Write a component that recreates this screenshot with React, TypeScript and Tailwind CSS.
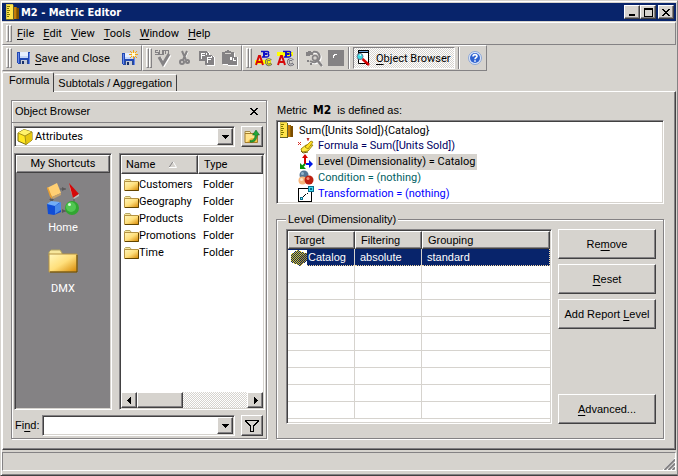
import type { ReactNode } from "react";
import clsx from "clsx";

const TAHOMA = "font-['Roboto','Liberation_Sans',sans-serif]";
const SANS = "font-['Liberation_Sans',Arial,sans-serif]";

const RAISED =
  "border border-t-white border-l-white border-r-[#424142] border-b-[#424142] bg-[#d6d3ce] shadow-[inset_-1px_-1px_0_#848284]";
const SUNKEN =
  "border border-t-[#848284] border-l-[#848284] border-r-white border-b-white p-px shadow-[inset_1px_1px_0_#424142,inset_-1px_-1px_0_#d6d3ce]";
const GROOVE = "border border-[#848284] shadow-[1px_1px_0_#fff,inset_1px_1px_0_#fff]";
const DITHER = "bg-[repeating-conic-gradient(#fff_0_25%,#d6d3ce_0_50%)] bg-[length:2px_2px]";

const MENUS = ["File", "Edit", "View", "Tools", "Window", "Help"];
const FOLDERS = ["Customers", "Geography", "Products", "Promotions", "Time"];
const EMPTY_ROWS = 9;

interface IconProps {
  className?: string;
}

function Hot({ text, at = 0 }: { text: string; at?: number }) {
  return (
    <span className="whitespace-pre">
      {text.slice(0, at)}
      <span className="underline underline-offset-2">{text[at]}</span>
      {text.slice(at + 1)}
    </span>
  );
}

/* ---------- icons ---------- */

function RulerIcon({ className }: IconProps) {
  return (
    <svg viewBox="0 0 14 16" className={clsx("h-4 w-[14px] shrink-0", className)} shapeRendering="crispEdges">
      <path d="M9 4h4v11H9z" fill="#7b4d00" />
      <path d="M7 3h4v12H7z" fill="#c67d08" />
      <path d="M10 3h1v12h-1z" fill="#946100" />
      <path d="M0 0h7v15H0z" fill="#ffe34a" />
      <path d="M0 0h7v1H0zM0 0h1v15H0z" fill="#d6c34a" />
      <path d="M7 1h1v14H7zM0 15h8v1H0z" fill="#63612a" />
      <path d="M1 2h3v1H1zM1 4h2v1H1zM1 6h3v1H1zM1 8h2v1H1zM1 10h3v1H1zM1 12h2v1H1z" fill="#7b7500" />
    </svg>
  );
}

function Floppy() {
  return (
    <>
      <path d="M0 1h13v12H1L0 12z" fill="#2149b5" />
      <path d="M1 2h1v10H1zM12 2h1v11h-1z" fill="#6b8ae7" />
      <path d="M3 1h8v6H3z" fill="#e7efff" />
      <path d="M3 5h8v2H3z" fill="#c6d7f7" />
      <path d="M3 9h8v4H3z" fill="#314a84" />
      <path d="M4 9h6v4H4z" fill="#c6cbd6" />
      <path d="M5 10h2v3H5z" fill="#18306b" />
    </>
  );
}

function SaveIcon() {
  return (
    <svg viewBox="0 0 14 14" className="size-[14px]" shapeRendering="crispEdges">
      <Floppy />
    </svg>
  );
}

function SaveNewIcon() {
  return (
    <svg viewBox="0 0 16 16" className="size-4" shapeRendering="crispEdges">
      <g transform="translate(0 2)">
        <Floppy />
      </g>
      <path d="M9 2h5v5H9z" fill="#ffe794" />
      <path d="M11 0h1v9h-1zM7 4h9v1H7zM8 1h1v1H8zM9 2h1v1H9zM14 1h1v1h-1zM13 2h1v1h-1zM8 7h1v1H8zM9 6h1v1H9zM14 7h1v1h-1zM13 6h1v1h-1z" fill="#efa218" />
      <path d="M10 3h3v3h-3z" fill="#fffbd6" />
    </svg>
  );
}

function SumCheckIcon() {
  return (
    <svg viewBox="0 0 18 18" className="size-[18px]" fill="none">
      <path d="m6 9 4 7 6-10" stroke="#fff" strokeWidth="3" />
      <path d="m5 8 4 7 6-10" stroke="#848284" strokeWidth="3" />
      <path
        d="M4 1.500H1.500V3H4v2.500H1M5.500 1v4.500H8V1M9.500 6V1.500H14V6M11.500 2v3"
        stroke="#848284"
        shapeRendering="crispEdges"
      />
    </svg>
  );
}

function CutIcon() {
  return (
    <svg viewBox="0 0 12 16" className="h-4 w-3" fill="none">
      <g stroke="#fff" transform="translate(1 1)">
        <path d="m3 1 4 9M8 1 4 10" />
      </g>
      <g stroke="#848284" strokeWidth="2">
        <path d="m3 1 4 9M8 1 4 10" />
        <circle cx="3" cy="12" r="2" />
        <circle cx="8.500" cy="11.500" r="1.500" />
      </g>
    </svg>
  );
}

function CopyIcon() {
  return (
    <svg viewBox="0 0 16 16" className="size-4" shapeRendering="crispEdges">
      <path d="M2 2h7l2 2v7H2z" fill="#fff" />
      <path d="M0 1h7l3 3v7H0z" fill="#848284" />
      <path d="M2 3h4v1H3v1h3v1H3v3H2zM7 3h1v2H7z" fill="#fff" />
      <path d="M8 6h6l2 2v8H8z" fill="#fff" />
      <path d="M6 5h6l3 3v7H6z" fill="#848284" />
      <path d="M8 7h4v1H9v1h3v1H9v3H8zM12 6h1v2h-1z" fill="#fff" />
    </svg>
  );
}

function PasteIcon() {
  return (
    <svg viewBox="0 0 17 16" className="h-4 w-[17px]" shapeRendering="crispEdges">
      <path d="M2 3h12v4h3v9H7v-1H2z" fill="#fff" />
      <path d="M1 2h3V1h2V0h2v1h2v1h3v5h3v8H7v-1H1z" fill="#848284" />
      <path d="M4 3h6v1H4z" fill="#d6d3ce" />
      <path d="M9 7h2v3H9zM12 8h1v2h2v1h-3z" fill="#fff" />
    </svg>
  );
}

function AbcIcon({ top = false }: { top?: boolean }) {
  return (
    <svg viewBox="0 0 17 17" className="size-[17px]" fill="none">
      <path d={top ? "M0 2h16v4H0z" : "M0 10h16v4H0z"} fill="#ffff00" />
      <path d="m1 15 3-9h1l3 9M2 12h5" stroke="#d60808" strokeWidth="2" />
      <path d="M6 1.500h6.500c1.500 0 1.500 2 0 2.500 2 0 1.500 3-.5 3H7" stroke="#1010c6" strokeWidth="1.500" />
      <path d="M9 1v6M8 4h4" stroke="#1010c6" strokeWidth="2" />
      <path d="M16 10.500c-3-2.500-5.500 0-4.500 2.500s3 2.500 5 .5" stroke="#63616b" strokeWidth="2.500" />
      <path d="M16 10.500c-3-2.500-5.500 0-4.500 2.500s3 2.500 5 .5" stroke={top ? "#e7e7e7" : "#ffff00"} />
    </svg>
  );
}

function FindIcon() {
  return (
    <svg viewBox="0 0 17 17" className="size-[17px]" fill="none">
      <g stroke="#fff" strokeWidth="2" transform="translate(1 1)">
        <path d="M7 2c5-1 8 3 6 7s-6 4-9 2" />
        <path d="m12 11 4 4" />
      </g>
      <path d="M0 2h2V1h3v1h2v3H4v1H0zM1 10h2v2H1zM4 13h2v2H4z" fill="#848284" />
      <g stroke="#848284">
        <path d="M7 2c5-1 8 3 6 7s-6 4-9 2" strokeWidth="2" />
        <circle cx="9" cy="8" r="2.500" strokeWidth="1.500" />
        <path d="m11 10 5 6" strokeWidth="2.500" />
      </g>
    </svg>
  );
}

function BlockIcon() {
  return (
    <svg viewBox="0 0 16 16" className="size-4" shapeRendering="crispEdges">
      <path d="M0 0h16v16H0z" fill="#848284" />
      <path d="M6 4h3v1H7v1H6v2H5V5h1z" fill="#fff" />
    </svg>
  );
}

function BrowseIcon() {
  return (
    <svg viewBox="0 0 15 16" className="h-4 w-[15px]">
      <path d="M2.500.500h10v13h-10z" fill="#fff" stroke="#000" />
      <path d="M2 0h11v3H2z" fill="#000" />
      <path d="M3 1h9v1H3z" fill="#73a6de" />
      <circle cx="4" cy="6.500" r="3" fill="#39dfe7" stroke="#63718c" />
      <path d="m3 5 2-1v2z" fill="#fff" />
      <path d="m6.500 9 6.500 6" stroke="#d60000" strokeWidth="2.500" />
      <path d="m9 13 2 2" stroke="#730000" />
    </svg>
  );
}

function HelpIcon() {
  return (
    <svg viewBox="0 0 14 14" className="size-[14px]" fill="none">
      <circle cx="7" cy="7" r="6.500" fill="#dfe9fb" stroke="#8ca6d6" />
      <circle cx="7" cy="7" r="5" fill="#2f62d0" />
      <path d="M5 5.500C5 3 9 3 9 5.300 9 6.500 7 6.800 7 8.200M7 9.300v1.400" stroke="#fff" strokeWidth="1.600" />
    </svg>
  );
}

function CubeIcon() {
  return (
    <svg viewBox="0 0 16 16" className="size-4 shrink-0" strokeLinejoin="round">
      <path d="M7 .500 15 3v8l-6 4.500L1 12V4z" fill="#ffe721" stroke="#7b6d10" />
      <path d="m1 4 7 3 7-4-8-2.500z" fill="#fff36b" />
      <path d="m8 7 7-4v8l-6 4.500z" fill="#e7c710" />
      <path d="m1 4 7 3 7-4M8 7l1 8" fill="none" stroke="#a59218" />
    </svg>
  );
}

function SelectedCubeIcon() {
  return (
    <svg viewBox="0 0 16 16" className="block size-4 shrink-0" shapeRendering="crispEdges">
      <defs>
        <pattern id="check" width="2" height="2" patternUnits="userSpaceOnUse">
          <path d="M1 0h1v1H1zM0 1h1v1H0z" fill="#08246b" />
        </pattern>
      </defs>
      <path d="m7 0 7 3 2 1v7l-7 5-9-4V4z" fill="#e7cb21" />
      <path d="m8 7 8-4v8l-7 5z" fill="#bd9a18" />
      <path d="m7 0 7 3 2 1v7l-7 5-9-4V4z" fill="url(#check)" />
    </svg>
  );
}

function FolderIcon({ big = false }: { big?: boolean }) {
  const id = big ? "folderBig" : "folderSmall";
  return (
    <svg viewBox="0 0 30 24" className={big ? "h-6 w-[30px]" : "h-3 w-[15px] shrink-0"}>
      <defs>
        <linearGradient id={id} x1="0" y1="0" x2="1" y2="1">
          <stop offset="0" stopColor="#fff7bd" />
          <stop offset="0.500" stopColor="#ffdf7b" />
          <stop offset="1" stopColor="#d68600" />
        </linearGradient>
      </defs>
      <path d="M1 5V3l2-2h9l2 3v3H1z" fill="#f7e79c" stroke="#b5a663" strokeWidth={big ? 1 : 2} />
      <path d="M1 5h28v18H1z" fill={`url(#${id})`} stroke="#b59242" strokeWidth={big ? 1 : 2} />
      <path d="M29 6v17H2" fill="none" stroke="#634500" strokeWidth={big ? 1 : 2} />
    </svg>
  );
}

function FolderUpIcon() {
  return (
    <svg viewBox="0 0 16 15" className="h-[15px] w-4">
      <path d="M1 4.500V2.500h5l1 2" fill="#ffefad" stroke="#a58a4a" />
      <path d="M1 4.500h12.500v9H1z" fill="#ffe38c" stroke="#a57d29" />
      <path d="M7 9h6v4H3z" fill="#f7c34a" />
      <path d="M6 11.500c3.500 0 5-2 5-5.500H8.500L12 1l3.500 5H13c0 5-3 8-7 7z" fill="#21a639" stroke="#086118" strokeWidth="0.500" />
    </svg>
  );
}

function HomeIcon() {
  return (
    <svg viewBox="0 0 32 32" className="size-8">
      <path d="M13 6h6M4 14v5M15 28h5M27 15v5" stroke="#5a595a" />
      <path d="m15 4 4 2-4 2zM2 16h5l-2 3zM15 26l4 2-4 2z" fill="#5a595a" />
      <path d="m0 5 10-5 4 10-9 4z" fill="#ffcf73" />
      <path d="m5 14 9-4v2l-8 4z" fill="#c6a26b" />
      <path d="m0 5 3 9 2 2v-2L1 4z" fill="#e79e31" />
      <path d="m22 0 10 11-6 4z" fill="#d60808" />
      <path d="m22 0 1 6 3 9z" fill="#ff7b7b" />
      <path d="m26 15 6-4v2l-5 3z" fill="#bdbebd" />
      <path d="M0 21 8 19l6 1v9l-7 3-6-1z" fill="#104dd6" />
      <path d="m0 21 4-3 9 1-5 4z" fill="#73aef7" />
      <path d="m8 23 6-4v8l-6 4z" fill="#4a8ae7" />
      <circle cx="25" cy="25" r="7" fill="#31a631" />
      <circle cx="24" cy="24" r="5" fill="#52c752" />
      <circle cx="22.500" cy="21.500" r="1.500" fill="#d6ffd6" />
    </svg>
  );
}

function FormulaIcon() {
  return (
    <svg viewBox="0 0 16 16" className="size-4">
      <path d="m3 11 5-4h7l-5 6-6 1z" fill="#ffeb42" stroke="#a58a08" />
      <path d="m7 9 6-6 2 1-5 7z" fill="#ffdf21" stroke="#947500" strokeWidth="0.750" />
      <path d="m3 13 2 2 5-1" fill="none" stroke="#6b5d08" />
      <path d="m0 4 3 3M3 4 0 7M9 0l1 2 1-2M10 2v1" stroke="#d63129" />
    </svg>
  );
}

function LevelIcon() {
  return (
    <svg viewBox="0 0 16 16" className="size-4">
      <path d="M7 3v7" stroke="#d60000" strokeWidth="2" />
      <path d="m7 0 3 4H4z" fill="#d60000" />
      <path d="M8 10h4" stroke="#0018e7" strokeWidth="2" />
      <path d="m11 6 4 4-4 4z" fill="#0018e7" />
      <path d="m7 10-3 3" stroke="#089208" strokeWidth="2" />
      <path d="M2 9v6h6z" fill="#089208" />
    </svg>
  );
}

function ConditionIcon() {
  return (
    <svg viewBox="0 0 16 16" className="size-4">
      <circle cx="6" cy="5" r="4.500" fill="#527594" />
      <circle cx="4.500" cy="3.500" r="1.500" fill="#94b6ce" />
      <circle cx="4.500" cy="10.500" r="4" fill="#f7b67b" />
      <circle cx="3.500" cy="9.500" r="1.500" fill="#ffe3c6" />
      <circle cx="11" cy="10" r="4.500" fill="#bd2110" />
      <circle cx="10" cy="8.500" r="1.500" fill="#f78a73" />
    </svg>
  );
}

function TransformationIcon() {
  return (
    <svg viewBox="0 0 16 16" className="size-4" shapeRendering="crispEdges">
      <path d="M0 2h14v14H0z" fill="#000" />
      <path d="M1 3h12v12H1z" fill="#fff" />
      <path d="M10 0h6v6h-6z" fill="#086d8c" />
      <path d="M11 1h4v4h-4z" fill="#42d7ef" />
      <path d="M12 2h2v2h-2z" fill="#086d8c" />
      <path d="M2 11h3v3H2z" fill="#086d8c" />
      <path d="M3 12h1v1H3z" fill="#8cefff" />
      <path d="M6 9h1v1H6zM7 8h1v1H7zM9 7h1v1H9zM5 10h1v1H5z" fill="#000" />
    </svg>
  );
}

function FunnelIcon() {
  return (
    <svg viewBox="0 0 14 12" className="h-3 w-[14px]" shapeRendering="crispEdges">
      <path d="M0 0h14v2h-1v1h-1v1h-1v1h-1v1H9v6H5V6H4V5H3V4H2V3H1V2H0z" fill="#000" />
      <path d="M2 1h10v1h-1v1h-1v1H9v1H8v6H6V5H5V4H4V3H3V2H2z" fill="#d6d3ce" />
    </svg>
  );
}

function Arrow({ dir }: { dir: "down" | "left" | "right" }) {
  const paths = {
    down: "M1 2h7v1H7v1H6v1H5v1H4V5H3V4H2V3H1z",
    left: "M6 0v7H5V6H4V5H3V4H2V3h1V2h1V1h1V0z",
    right: "M3 0v7h1V6h1V5h1V4h1V3H6V2H5V1H4V0z",
  };
  return (
    <svg viewBox="0 0 9 7" className="h-[7px] w-[9px]" shapeRendering="crispEdges">
      <path d={paths[dir]} fill="#000" />
    </svg>
  );
}

function CloseGlyph() {
  return (
    <svg viewBox="0 0 8 7" className="h-[7px] w-2" shapeRendering="crispEdges">
      <path d="M0 0h2v1h1v1h2V1h1V0h2v1H7v1H6v1H5v1h1v1h1v1h1v1H6V6H5V5H3v1H2v1H0V6h1V5h1V4h1V3H2V2H1V1H0z" fill="#000" />
    </svg>
  );
}

/* ---------- controls ---------- */

function Grip() {
  const bar = "w-[3px] border border-t-white border-l-white border-r-[#848284] border-b-[#848284]";
  return (
    <span className="flex shrink-0 self-stretch py-[2px]">
      <span className={bar} />
      <span className={bar} />
    </span>
  );
}

function Band({ children, className }: { children: ReactNode; className?: string }) {
  return (
    <div
      className={clsx(
        "flex items-center border border-t-white border-l-white border-r-[#848284] border-b-[#848284] pl-[3px]",
        className,
      )}
    >
      <Grip />
      {children}
    </div>
  );
}

function ToolButton({ label, children, disabled }: { label: string; children: ReactNode; disabled?: boolean }) {
  return (
    <button type="button" aria-label={label} disabled={disabled} className="flex h-5 w-[22px] items-center justify-center">
      {children}
    </button>
  );
}

function Separator() {
  return <span className="mx-px h-[22px] w-[2px] shrink-0 border-l border-l-[#848284] bg-white" />;
}

function CaptionButton({ label, children }: { label: string; children: ReactNode }) {
  return (
    <button type="button" aria-label={label} className={clsx(RAISED, "flex h-[14px] w-4 items-center justify-center")}>
      {children}
    </button>
  );
}

function PushButton({ text, at = 0 }: { text: string; at?: number }) {
  return (
    <button type="button" className={clsx(RAISED, "h-[30px] w-full")}>
      <Hot text={text} at={at} />
    </button>
  );
}

function DropArrow() {
  return (
    <span className={clsx(RAISED, "flex w-4 shrink-0 items-center justify-center self-stretch")}>
      <Arrow dir="down" />
    </span>
  );
}

/* ---------- panels ---------- */

function ObjectBrowser() {
  return (
    <section className={clsx(GROOVE, "flex w-[256px] shrink-0 flex-col")}>
      <header className="flex h-[22px] items-center justify-between border-b border-[#848284] pr-2 pl-[3px]">
        <h2>Object Browser</h2>
        <button type="button" aria-label="Close">
          <CloseGlyph />
        </button>
      </header>

      <div className={clsx(TAHOMA, "flex items-center gap-[6px] pt-[3px] pr-[3px] pl-[2px]")}>
        <div className={clsx(SUNKEN, "flex h-[21px] min-w-0 flex-1 items-center bg-white")}>
          <span className="pr-[2px] pl-px">
            <CubeIcon />
          </span>
          <select aria-label="Look in" className="min-w-0 flex-1 appearance-none bg-transparent outline-none">
            <option>Attributes</option>
          </select>
          <DropArrow />
        </div>
        <button type="button" aria-label="Up one level" className={clsx(RAISED, "flex h-[21px] w-[22px] items-center justify-center")}>
          <FolderUpIcon />
        </button>
      </div>

      <div className={clsx(TAHOMA, "flex flex-1 gap-[7px] pt-[6px] pr-px pl-[2px]")}>
        <nav className={clsx(SUNKEN, "flex w-[98px] shrink-0 flex-col bg-[#848284] text-white")}>
          <h3 className={clsx(RAISED, "h-[18px] text-center leading-4 text-black")}>My Shortcuts</h3>
          <a href="#home" className="mt-[10px] flex flex-col items-center">
            <HomeIcon />
            <span className="mt-[6px]">Home</span>
          </a>
          <a href="#dmx" className="mt-[15px] flex flex-col items-center">
            <FolderIcon big />
            <span className="mt-[9px]">DMX</span>
          </a>
        </nav>

        <div className={clsx(SUNKEN, "flex min-w-0 flex-1 flex-col bg-white")}>
          <table className="w-full table-fixed border-separate border-spacing-0 text-left">
            <thead>
              <tr className="h-[19px]">
                <th className={clsx(RAISED, "w-[77px] px-1 font-normal")}>
                  <span className="flex items-center justify-between pr-4">
                    Name
                    <svg viewBox="0 0 8 7" className="h-[7px] w-2">
                      <path d="M0 6.500 4 .500" stroke="#848284" />
                      <path d="M4 .500 7.500 6.500H0" fill="none" stroke="#fff" />
                    </svg>
                  </span>
                </th>
                <th className={clsx(RAISED, "px-[5px] font-normal")}>Type</th>
              </tr>
            </thead>
            <tbody className="before:block before:h-[2px]">
              {FOLDERS.map((name) => (
                <tr key={name} className="h-[17px]">
                  <td className="p-0">
                    <span className="flex items-center pl-[3px]">
                      <FolderIcon />
                      {name}
                    </span>
                  </td>
                  <td className="p-0 pl-[5px]">Folder</td>
                </tr>
              ))}
            </tbody>
          </table>
          <div className={clsx(DITHER, "mt-auto flex h-4")}>
            <button type="button" aria-label="Scroll left" className={clsx(RAISED, "flex w-4 items-center justify-center")}>
              <Arrow dir="left" />
            </button>
            <span className={clsx(RAISED, "w-[46px]")} />
            <button type="button" aria-label="Scroll right" className={clsx(RAISED, "ml-auto flex w-4 items-center justify-center")}>
              <Arrow dir="right" />
            </button>
          </div>
        </div>
      </div>

      <div className="flex items-center pt-[5px] pr-[3px] pb-[2px] pl-[3px]">
        <label htmlFor="find" className="w-[27px]">
          <Hot text="Find:" at={2} />
        </label>
        <div className={clsx(SUNKEN, "flex h-[21px] min-w-0 flex-1 items-center bg-white")}>
          <input id="find" className="min-w-0 flex-1 px-1 outline-none" />
          <DropArrow />
        </div>
        <button type="button" aria-label="Filter" className={clsx(RAISED, "ml-[6px] flex h-[21px] w-[22px] items-center justify-center")}>
          <FunnelIcon />
        </button>
      </div>
    </section>
  );
}

function DefinitionTree() {
  const parts = [
    { text: "Formula = Sum([Units Sold])", color: "text-[#000063]", icon: <FormulaIcon /> },
    { text: "Level (Dimensionality) = Catalog", color: "bg-[#d6d3ce] text-black", icon: <LevelIcon /> },
    { text: "Condition = (nothing)", color: "text-[#006163]", icon: <ConditionIcon /> },
    { text: "Transformation = (nothing)", color: "text-[#0000ff]", icon: <TransformationIcon /> },
  ];
  return (
    <div className={clsx(SUNKEN, TAHOMA, "min-h-[84px] bg-white")}>
      <div className="flex h-4 items-center gap-[5px] pl-[2px]">
        <RulerIcon />
        Sum([Units Sold]){"{Catalog}"}
      </div>
      <ul>
        {parts.map((part) => (
          <li key={part.text} className="flex h-4 items-center gap-[2px] pl-5">
            {part.icon}
            <span className={clsx("px-[2px] leading-4", part.color)}>{part.text}</span>
          </li>
        ))}
      </ul>
    </div>
  );
}

function LevelTable() {
  const cell = "border-r border-b border-[#d6d3ce] p-0 last:border-r-0";
  const picked = "border-r border-[#d6d3ce] bg-[#08246b] p-0 text-white last:border-r-0";
  const head = clsx(RAISED, "pl-[5px] font-normal");
  return (
    <div className={clsx(SUNKEN, "min-w-0 flex-1 bg-white")}>
      <table className="w-full table-fixed border-separate border-spacing-0 text-left">
        <thead>
          <tr className="h-[18px]">
            <th className={clsx(head, "w-[67px]")}>Target</th>
            <th className={clsx(head, "w-[67px]")}>Filtering</th>
            <th className={head}>Grouping</th>
          </tr>
        </thead>
        <tbody>
          <tr className="h-[17px]">
            <td className={picked}>
              <span className="flex h-[17px] items-center">
                <span className="shrink-0 bg-white pl-[3px]">
                  <SelectedCubeIcon />
                </span>
                <span className="flex-1 border-b border-dotted border-[#f7dba5] pl-px leading-4">Catalog</span>
              </span>
            </td>
            <td className={picked}>
              <span className="block h-[17px] border-b border-dotted border-[#f7dba5] pl-[5px] leading-4">absolute</span>
            </td>
            <td className={picked}>
              <span className="block h-[17px] border-r border-b border-dotted border-[#f7dba5] pl-[5px] leading-4">
                standard
              </span>
            </td>
          </tr>
          {Array.from({ length: EMPTY_ROWS }, (_, i) => (
            <tr key={i} className="h-[17px]">
              <td className={cell} />
              <td className={cell} />
              <td className={cell} />
            </tr>
          ))}
        </tbody>
      </table>
    </div>
  );
}

export default function App() {
  return (
    <div
      className={clsx(
        SANS,
        "flex min-h-screen flex-col border border-t-[#d6d3ce] border-r-[#848284] border-b-[#424142] border-l-[#d6d3ce] bg-[#d6d3ce] p-px text-[11px] leading-[13px] text-black shadow-[inset_1px_1px_0_#fff,inset_0_-1px_0_#848284]",
      )}
    >
      <div className="mt-px flex h-[18px] items-center bg-[#08246b] pr-[2px] pl-1 text-white">
        <RulerIcon />
        <h1 className="ml-px flex-1 font-['DejaVu_Sans_Condensed','DejaVu_Sans',sans-serif] font-bold">M2 - Metric Editor</h1>
        <div className="flex">
          <CaptionButton label="Minimize">
            <svg viewBox="0 0 9 8" className="h-2 w-[9px]">
              <path d="M1 6h6v2H1z" fill="#000" />
            </svg>
          </CaptionButton>
          <CaptionButton label="Maximize">
            <svg viewBox="0 0 9 9" className="size-[9px]" shapeRendering="crispEdges">
              <path d="M0 0h9v9H0zM1 2v6h7V2z" fill="#000" fillRule="evenodd" />
            </svg>
          </CaptionButton>
          <span className="w-[2px]" />
          <CaptionButton label="Close">
            <CloseGlyph />
          </CaptionButton>
        </div>
      </div>

      <Band className={clsx(TAHOMA, "mt-px h-[23px]")}>
        <nav className="ml-[5px] flex gap-[9px]">
          {MENUS.map((menu) => (
            <button key={menu} type="button">
              <Hot text={menu} />
            </button>
          ))}
        </nav>
      </Band>

      <div className={clsx(TAHOMA, "flex h-[26px]")}>
        <Band className="w-[140px]">
          <button type="button" className="ml-[5px] flex items-center gap-1">
            <SaveIcon />
            <Hot text="Save and Close" />
          </button>
          <span className="ml-auto">
            <ToolButton label="Save as">
              <SaveNewIcon />
            </ToolButton>
          </span>
        </Band>
        <Band className="w-[100px]">
          <ToolButton label="Validate" disabled>
            <SumCheckIcon />
          </ToolButton>
          <ToolButton label="Cut" disabled>
            <CutIcon />
          </ToolButton>
          <ToolButton label="Copy" disabled>
            <CopyIcon />
          </ToolButton>
          <ToolButton label="Paste" disabled>
            <PasteIcon />
          </ToolButton>
        </Band>
        <Band className="w-[245px]">
          <ToolButton label="Name">
            <AbcIcon />
          </ToolButton>
          <ToolButton label="Caption">
            <AbcIcon top />
          </ToolButton>
          <Separator />
          <span className="w-[3px]" />
          <ToolButton label="Preview" disabled>
            <FindIcon />
          </ToolButton>
          <ToolButton label="Stop" disabled>
            <BlockIcon />
          </ToolButton>
          <Separator />
          <button
            type="button"
            aria-pressed="true"
            className={clsx(
              DITHER,
              "mx-[2px] flex h-[22px] flex-1 items-center gap-[5px] border border-t-[#848284] border-l-[#848284] border-r-white border-b-white pl-[2px]",
            )}
          >
            <BrowseIcon />
            <Hot text="Object Browser" />
          </button>
          <Separator />
          <span className="w-[3px]" />
          <ToolButton label="Help">
            <HelpIcon />
          </ToolButton>
        </Band>
      </div>

      <div role="tablist" className="mt-px flex items-end">
        <button
          type="button"
          role="tab"
          aria-selected="true"
          className="relative -mb-px h-5 rounded-t-[2px] border border-b-0 border-t-white border-l-white border-r-[#424142] bg-[#d6d3ce] pr-1 pb-1 pl-[6px]"
        >
          Formula
        </button>
        <button
          type="button"
          role="tab"
          aria-selected="false"
          className="h-[17px] rounded-t-[2px] border border-b-0 border-l-0 border-t-white border-r-[#424142] px-1"
        >
          Subtotals / Aggregation
        </button>
      </div>

      <main className={clsx(RAISED, "flex flex-1 gap-[9px] pt-2 pr-[11px] pb-[10px] pl-2")}>
        <ObjectBrowser />
        <div className="flex min-w-0 flex-1 flex-col">
          <p className="flex h-5 items-center pl-px">
            Metric
            <b className="mx-[6px] font-['DejaVu_Sans_Condensed','DejaVu_Sans',sans-serif] text-xs">M2</b>
            is defined as:
          </p>
          <DefinitionTree />
          <fieldset className={clsx(GROOVE, "mt-[9px] flex min-w-0 flex-1 gap-[6px] pt-[3px] pr-[7px] pb-[14px] pl-[9px]")}>
            <legend className="bg-[#d6d3ce] px-[2px]">Level (Dimensionality)</legend>
            <LevelTable />
            <div className="flex w-[98px] shrink-0 flex-col gap-[5px]">
              <PushButton text="Remove" at={2} />
              <PushButton text="Reset" />
              <PushButton text="Add Report Level" at={11} />
              <div className="mt-auto">
                <PushButton text="Advanced..." />
              </div>
            </div>
          </fieldset>
        </div>
      </main>

      <footer className="mt-[2px] mb-[3px] flex h-[19px] items-end justify-end border border-t-[#848284] border-l-[#848284] border-r-white border-b-white">
        <svg viewBox="0 0 12 12" className="size-3" fill="none">
          <path d="M0 12 12 0M4 12l8-8M8 12l4-4" stroke="#fff" />
          <path d="M1.500 12 12 1.500M5.500 12 12 5.500M9.500 12 12 9.500" stroke="#848284" strokeWidth="2" />
        </svg>
      </footer>
    </div>
  );
}
